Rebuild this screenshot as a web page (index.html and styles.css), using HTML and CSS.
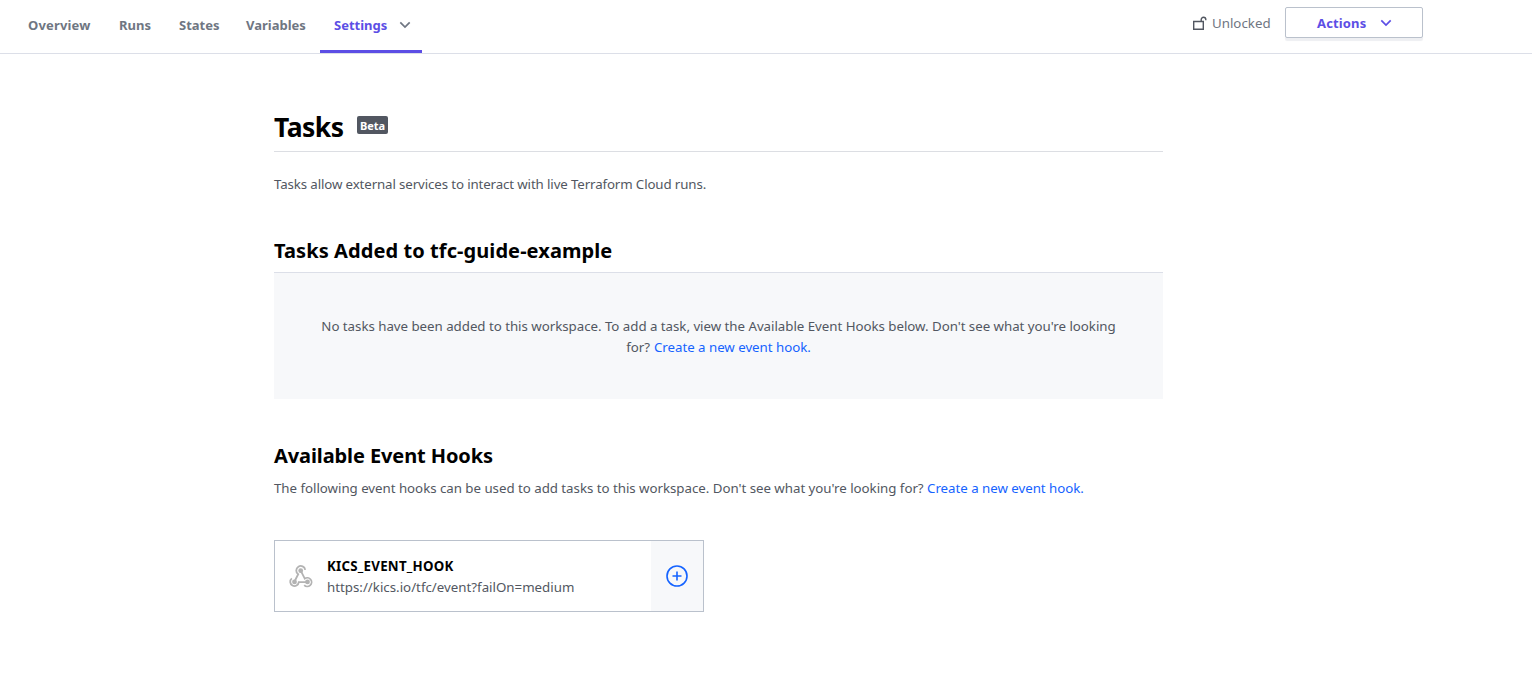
FILE: index.html
```html
<!DOCTYPE html>
<html lang="en">
<head>
<meta charset="utf-8">
<title>Tasks</title>
<link rel="stylesheet" href="styles.css">
</head>
<body>
<header class="topbar">
  <nav class="tabs">
    <a class="tab t-overview">Overview</a>
    <a class="tab t-runs">Runs</a>
    <a class="tab t-states">States</a>
    <a class="tab t-variables">Variables</a>
    <a class="tab t-settings active"><span>Settings</span>
      <svg class="chev" width="12" height="8" viewBox="0 0 12 8"><path d="M1.3 1.3 6 6l4.700-4.700"/></svg>
    </a>
  </nav>
  <div class="tools">
    <span class="lock">
      <svg width="15" height="15" viewBox="0 0 15 15"><path d="M1.700 5.500h9.600v7.800H1.700zM9.200 5.500V3.500a2.300 2.300 0 0 1 4.600 0v.8"/></svg>
      <span class="lock-text">Unlocked</span>
    </span>
    <button class="actions"><span>Actions</span>
      <svg class="chev" width="12" height="8" viewBox="0 0 12 8"><path d="M1.300 1.300 6 6l4.700-4.700"/></svg>
    </button>
  </div>
</header>
<main class="content">
  <div class="title-row"><h1 class="title">Tasks</h1><span class="badge">Beta</span></div>
  <p class="intro">Tasks allow external services to interact with live Terraform Cloud runs.</p>
  <h2 class="heading added">Tasks Added to tfc-guide-example</h2>
  <div class="empty">
    <div class="empty-1">No tasks have been added to this workspace. To add a task, view the Available Event Hooks below. Don't see what you're looking</div>
    <div class="empty-2">for? <a class="link">Create a new event hook.</a></div>
  </div>
  <h2 class="heading available">Available Event Hooks</h2>
  <p class="hint">The following event hooks can be used to add tasks to this workspace. Don't see what you're looking for? <a class="link">Create a new event hook.</a></p>
  <div class="card">
    <svg class="hook" width="24" height="24" viewBox="0 0 24 24">
      <g class="hook-lines"><path d="M16.200 5.800A4.500 4.500 0 1 0 9.200 10.200L5.500 17.500"/><path d="M2.800 14.400a4.300 4.300 0 1 0 7 3.800H18.500"/><path d="M11.700 6.700 15.800 14.600a4.300 4.300 0 1 1-.6 6.500"/></g>
      <circle cx="11.700" cy="6.700" r="2.400"/><circle cx="5.500" cy="17.900" r="2.400"/><circle cx="18.500" cy="17.900" r="2.400"/>
    </svg>
    <div class="card-text">
      <div class="card-name">KICS_EVENT_HOOK</div>
      <div class="card-url">https://kics.io/tfc/event?failOn=medium</div>
    </div>
    <div class="add">
      <svg width="22" height="22" viewBox="0 0 22 22"><circle cx="11" cy="11" r="10"/><path d="M11 6.500v9M6.500 11h9"/></svg>
    </div>
  </div>
</main>
</body>
</html>
```
FILE: styles.css
```css
* { box-sizing: border-box; }
body { margin: 0; background: #fff; color: #525761; font: 13.3px/21px "Noto Sans", "Open Sans", sans-serif; }
h1, h2, p { margin: 0; }
.topbar { height: 54px; border-bottom: 1px solid #dcdfe8; display: flex; justify-content: space-between; }
.tabs { display: flex; padding-left: 14px; }
.tab { display: flex; height: 53px; padding: 0 14px; line-height: 50px; font-size: 13px; font-weight: 700; color: #6f7682; border-bottom: 3px solid transparent; white-space: nowrap; }
.t-overview { width: 91px; letter-spacing: 0.15px; }
.t-runs { width: 60px; }
.t-states { width: 67px; }
.t-variables { width: 88px; }
.t-settings { width: 102px; }
.active { color: #5c4ee5; border-color: #5c4ee5; justify-content: space-between; align-items: center; padding-right: 11px; }
.chev { fill: none; stroke: #6f7682; stroke-width: 1.7; }
.tools { display: flex; padding: 7px 109px 0 0; }
.lock { display: flex; height: 32px; width: 93px; gap: 5px; align-items: center; white-space: nowrap; }
.lock svg { fill: none; stroke: #525761; stroke-width: 1.4; }
.lock-text { color: #6f7682; }
.actions { width: 138px; height: 31px; padding: 0 30px 0 31px; display: flex; align-items: center; justify-content: space-between; background: #fff; border: 1px solid #bac1cc; border-radius: 2px; box-shadow: 0 3px 1px #eeeff2; color: #5c4ee5; font: 700 13px/20px "Noto Sans", sans-serif; letter-spacing: 0.15px; }
.actions .chev { stroke: #5c4ee5; }
.content { width: 889px; margin-left: 274px; padding-top: 53px; }
.title-row { display: flex; height: 45px; border-bottom: 1px solid #dcdee3; }
.title { font-size: 26.5px; line-height: 41px; letter-spacing: -0.5px; color: #000; width: 83px; }
.badge { width: 31px; height: 18px; margin-top: 9px; border-radius: 2px; background: #525761; color: #fff; font-size: 11px; font-weight: 700; line-height: 19px; text-align: center; }
.intro { margin-top: 22px; letter-spacing: -0.125px; }
.heading { font-size: 20px; line-height: 30px; color: #000; white-space: nowrap; }
.added { margin-top: 41px; letter-spacing: 0.08px; }
.empty { margin-top: 6px; height: 127px; padding-top: 43px; background: #f7f8fa; border-top: 1px solid #dcdfe8; text-align: center; white-space: nowrap; }
.empty-1, .empty-2 { display: flex; justify-content: center; gap: 4px; letter-spacing: -0.03px; }
.link { color: #1563ff; }
.available { margin-top: 42px; letter-spacing: -0.1px; }
.hint { margin-top: 7px; white-space: nowrap; letter-spacing: -0.03px; }
.card { width: 430px; height: 72px; margin-top: 41px; border: 1px solid #bac1cc; display: flex; align-items: center; padding-left: 14px; }
.hook { fill: #b3b3b3; }
.hook-lines { fill: none; stroke: #b3b3b3; stroke-width: 1.8; }
.card-text { width: 324px; margin-left: 14px; padding-top: 2px; white-space: nowrap; }
.card-name { color: #000; font-weight: 700; font-size: 13.3px; letter-spacing: 0.25px; }
.add { width: 52px; height: 70px; background: #f7f8fa; display: flex; align-items: center; justify-content: center; }
.add svg { fill: none; stroke: #1563ff; stroke-width: 1.6; }
```
